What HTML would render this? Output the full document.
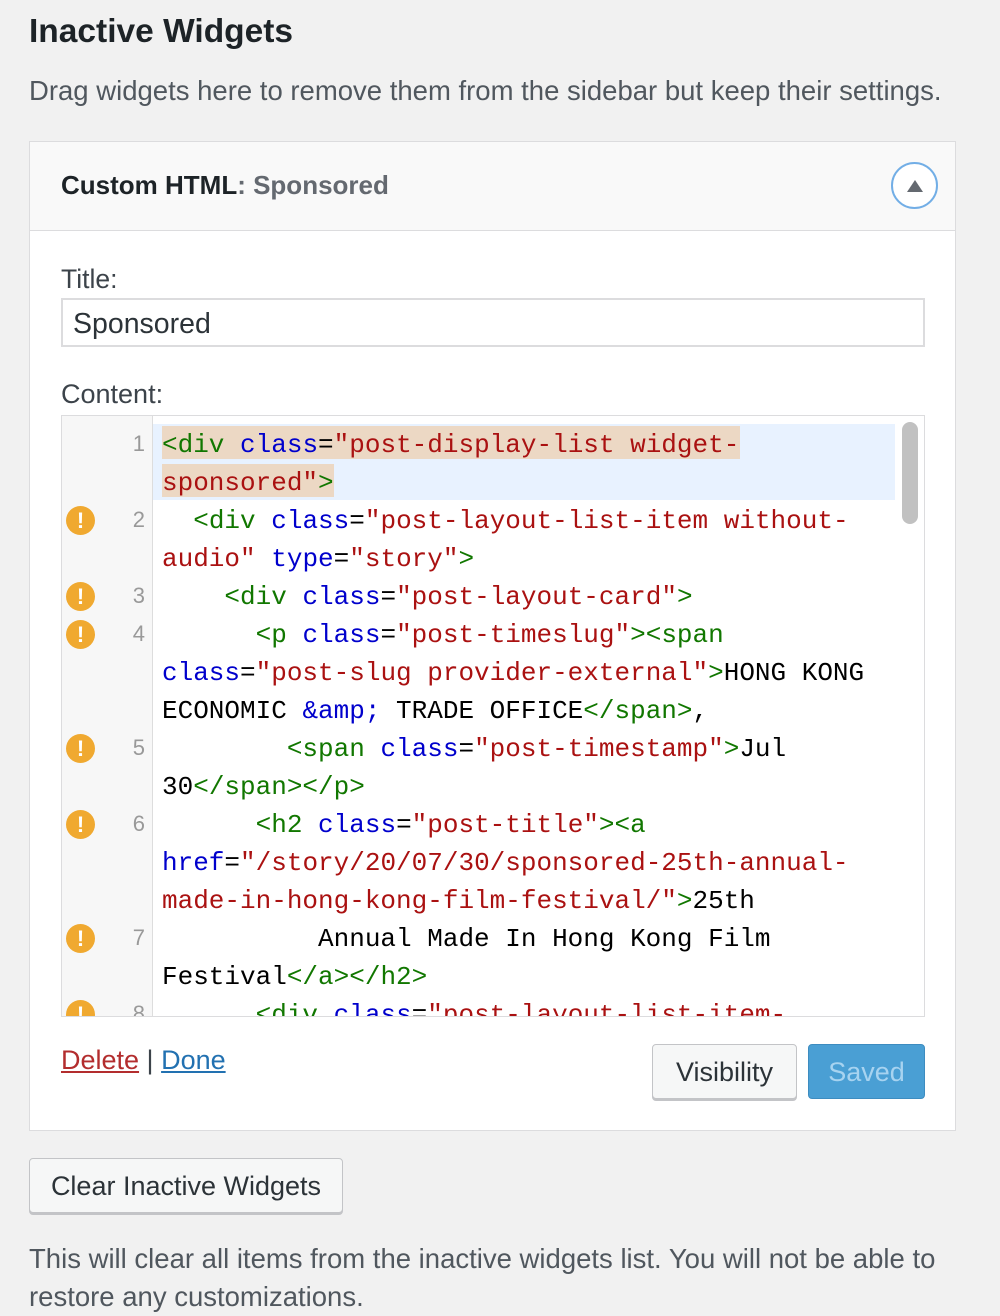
<!DOCTYPE html>
<html><head><meta charset="utf-8"><style>
body{margin:0;width:1000px;height:1312px;background:#f1f1f1;font-family:"Liberation Sans",sans-serif;color:#3c434a;position:relative;overflow:hidden}
.a{position:absolute;white-space:pre}
h1{position:absolute;left:29px;top:13px;margin:0;font-size:33.5px;font-weight:600;color:#1d2327}
.card{position:absolute;left:29px;top:141px;width:927px;height:990px;background:#fff;border:1px solid #dcdcde;box-sizing:border-box}
.head{position:absolute;left:0;top:0;right:0;height:88px;background:#f9f9f9;border-bottom:1px solid #dcdcde}
.ed{position:absolute;left:61px;top:415px;width:864px;height:602px;border:1px solid #dcdcde;box-sizing:border-box;overflow:hidden;background:#fff}
.gut{position:absolute;left:0;top:0;width:90px;height:100%;background:#f7f7f7;border-right:1px solid #ddd}
.code{font-family:"Liberation Mono",monospace;font-size:26px;line-height:38px;color:#000}
.t{color:#170}.at{color:#00c}.s{color:#a11}
.n{position:absolute;left:40px;width:43px;text-align:right;font-family:"Liberation Sans",sans-serif;font-size:22px;color:#999;line-height:38px}
.w{position:absolute;left:4px;width:29px;height:29px;border-radius:50%;background:#f0a930;color:#fff;font-weight:bold;font-size:22px;text-align:center;line-height:29px}
.btn{position:absolute;border:1px solid #c3c4c7;border-radius:4px;background:#f6f7f7;font-size:27px;color:#2c3338;text-align:center;box-shadow:0 2px 0 #c3c4c7;box-sizing:border-box}
</style></head><body>
<h1>Inactive Widgets</h1>
<div class="a" style="left:29px;top:75px;font-size:27.5px;color:#50575e">Drag widgets here to remove them from the sidebar but keep their settings.</div>
<div class="card">
 <div class="head">
  <div class="a" style="left:31px;top:28px;font-size:26px;font-weight:600;color:#1d2327">Custom HTML<span style="color:#646970">: Sponsored</span></div>
  <div style="position:absolute;left:861px;top:20px;width:43px;height:43px;border:2px solid #72aee6;border-radius:50%;background:#fff"><div style="position:absolute;left:14px;top:16px;border-left:8px solid transparent;border-right:8px solid transparent;border-bottom:12px solid #646970"></div></div>
 </div>
</div>
<div class="a" style="left:61px;top:264px;font-size:26.5px;color:#3c434a">Title:</div>
<div style="position:absolute;left:61px;top:298px;width:864px;height:49px;border:2px solid #dcdcde;box-sizing:border-box;background:#fff"></div>
<div class="a" style="left:73px;top:308px;font-size:28.5px;color:#2c3338">Sponsored</div>
<div class="a" style="left:61px;top:379px;font-size:27px;color:#3c434a">Content:</div>
<div class="ed">
 <div class="gut"></div>
 <div style="position:absolute;left:91px;top:8px;width:742px;height:76px;background:#e8f2ff"></div>
 <div style="position:absolute;left:100px;top:10px;width:578px;height:33px;background:#ecd8c4"></div>
 <div style="position:absolute;left:100px;top:48px;width:172px;height:33px;background:#ecd8c4"></div>
 <div style="position:absolute;left:840px;top:6px;width:16px;height:102px;background:#c1c1c1;border-radius:8px"></div>
 <div class="n" style="top:9px">1</div>
 <div class="n" style="top:85px">2</div><div class="w" style="top:90px">!</div>
 <div class="n" style="top:161px">3</div><div class="w" style="top:166px">!</div>
 <div class="n" style="top:199px">4</div><div class="w" style="top:204px">!</div>
 <div class="n" style="top:313px">5</div><div class="w" style="top:318px">!</div>
 <div class="n" style="top:389px">6</div><div class="w" style="top:394px">!</div>
 <div class="n" style="top:503px">7</div><div class="w" style="top:508px">!</div>
 <div class="n" style="top:579px">8</div><div class="w" style="top:584px">!</div>
 <div class="a code" style="left:100px;top:10px"><span class="t">&lt;div</span> <span class="at">class</span>=<span class="s">"post-display-list widget-</span>
<span class="s">sponsored"</span><span class="t">&gt;</span>
  <span class="t">&lt;div</span> <span class="at">class</span>=<span class="s">"post-layout-list-item without-</span>
<span class="s">audio"</span> <span class="at">type</span>=<span class="s">"story"</span><span class="t">&gt;</span>
    <span class="t">&lt;div</span> <span class="at">class</span>=<span class="s">"post-layout-card"</span><span class="t">&gt;</span>
      <span class="t">&lt;p</span> <span class="at">class</span>=<span class="s">"post-timeslug"</span><span class="t">&gt;&lt;span</span>
<span class="at">class</span>=<span class="s">"post-slug provider-external"</span><span class="t">&gt;</span>HONG KONG
ECONOMIC <span class="at">&amp;amp;</span> TRADE OFFICE<span class="t">&lt;/span&gt;</span>,
        <span class="t">&lt;span</span> <span class="at">class</span>=<span class="s">"post-timestamp"</span><span class="t">&gt;</span>Jul
30<span class="t">&lt;/span&gt;&lt;/p&gt;</span>
      <span class="t">&lt;h2</span> <span class="at">class</span>=<span class="s">"post-title"</span><span class="t">&gt;&lt;a</span>
<span class="at">href</span>=<span class="s">"/story/20/07/30/sponsored-25th-annual-</span>
<span class="s">made-in-hong-kong-film-festival/"</span><span class="t">&gt;</span>25th
          Annual Made In Hong Kong Film
Festival<span class="t">&lt;/a&gt;&lt;/h2&gt;</span>
      <span class="t">&lt;div</span> <span class="at">class</span>=<span class="s">"post-layout-list-item-</span></div>
</div>
<div class="a" style="left:61px;top:1045px;font-size:27px"><span style="color:#b32d2e;text-decoration:underline">Delete</span> | <span style="color:#2271b1;text-decoration:underline">Done</span></div>
<div class="btn" style="left:652px;top:1044px;width:145px;height:55px;line-height:55px">Visibility</div>
<div class="btn" style="left:808px;top:1044px;width:117px;height:55px;line-height:55px;background:#4a9fd4;border-color:#3d8cc0;color:#a7d3f0;box-shadow:none">Saved</div>
<div class="btn" style="left:29px;top:1158px;width:314px;height:55px;line-height:55px">Clear Inactive Widgets</div>
<div class="a" style="left:29px;top:1240px;font-size:27.5px;line-height:38px;color:#50575e">This will clear all items from the inactive widgets list. You will not be able to
restore any customizations.</div>
</body></html>
